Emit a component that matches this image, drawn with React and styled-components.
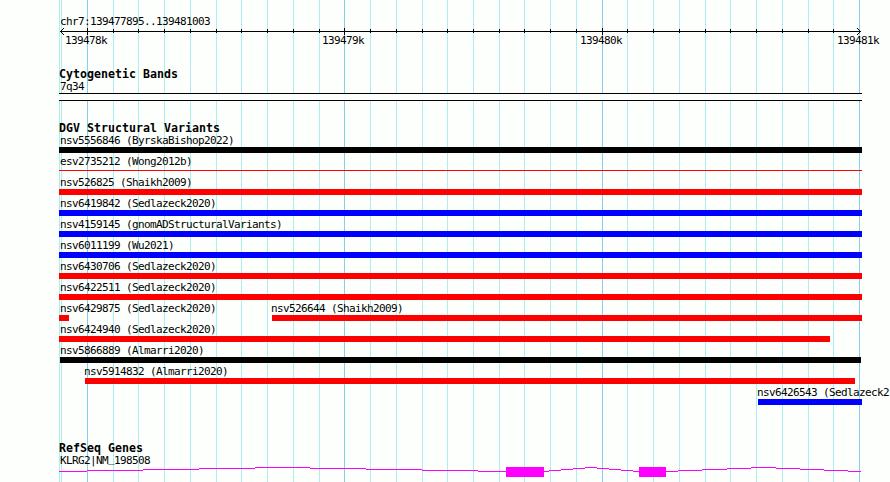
import React from 'react';
import styled, { createGlobalStyle } from 'styled-components';

const GlobalStyle = createGlobalStyle`
	body {
		margin: 0;
		background: #fdfffc;
		overflow: hidden;
	}
`;

const Browser = styled.main`
	position: relative;
	box-sizing: border-box;
	width: 890px;
	height: 482px;
	padding: 13px 0 0 59px;
	overflow: hidden;
	color: #000;
	font-family: 'DejaVu Sans Mono', 'Liberation Mono', monospace;
	font-size: 11px;
	letter-spacing: -0.622px;
	white-space: pre;
`;

const GridLines = styled.svg`
	position: absolute;
	top: 0;
	left: 0;
	display: block;
`;

const Content = styled.div`
	position: relative;
`;

const Label = styled.div`
	height: 15px;
	padding-left: 1px;
	line-height: 17px;
`;

const Underscore = styled.span`
	line-height: 1;
	vertical-align: 2px;
`;

const Drawing = styled.svg`
	display: block;
	overflow: visible;
`;

const Coordinates = styled.div`
	display: flex;
	height: 15px;
	line-height: 11px;
`;

const Coordinate = styled.span`
	flex: none;
	width: 42px;
	margin-left: ${({ $gap }) => $gap}px;
`;

const Track = styled.section`
	margin-top: ${({ $top }) => $top}px;
`;

const TrackTitle = styled.h2`
	height: 12px;
	margin: 0;
	font-size: 11.6px;
	font-weight: 700;
	line-height: 16px;
	letter-spacing: 0.016px;
`;

const Band = styled.div`
	box-sizing: border-box;
	width: 803px;
	height: 8px;
	border: solid #000;
	border-width: 1px 0;
	background: #fdfffc;
`;

const Row = styled.div`
	display: flex;
	height: 21px;
`;

const Feature = styled.div`
	flex: none;
	width: ${({ $width }) => $width}px;
	margin-left: ${({ $gap }) => $gap}px;
`;

const FeatureLabel = styled(Label)`
	padding-left: 0;
	text-indent: ${({ $indent }) => $indent}px;
`;

const Bar = styled.div`
	height: ${({ $thin }) => ($thin ? 1 : 6)}px;
	margin-top: ${({ $thin }) => ($thin ? 2 : 0)}px;
	background: ${({ $color }) => $color};
`;

const minorTicks = [
	113, 138, 164, 190, 216, 241, 267, 293, 319, 370, 396, 422, 447, 473, 499,
	524, 550, 576, 627, 653, 679, 705, 730, 756, 782, 808, 833,
];
const majorTicks = [87, 344, 602, 859];

const red = '#ff0000';
const blue = '#0000ff';
const black = '#000000';

const variants = [
	[{ name: 'nsv5556846 (ByrskaBishop2022)', width: 803, color: black }],
	[{ name: 'esv2735212 (Wong2012b)', width: 803, color: red, thin: true }],
	[{ name: 'nsv526825 (Shaikh2009)', width: 803, color: red }],
	[{ name: 'nsv6419842 (Sedlazeck2020)', width: 803, color: blue }],
	[{ name: 'nsv4159145 (gnomADStructuralVariants)', width: 803, color: blue }],
	[{ name: 'nsv6011199 (Wu2021)', width: 803, color: blue }],
	[{ name: 'nsv6430706 (Sedlazeck2020)', width: 803, color: red }],
	[{ name: 'nsv6422511 (Sedlazeck2020)', width: 803, color: red }],
	[
		{ name: 'nsv6429875 (Sedlazeck2020)', width: 10, color: red },
		{ name: 'nsv526644 (Shaikh2009)', gap: 203, width: 590, color: red, indent: -1 },
	],
	[{ name: 'nsv6424940 (Sedlazeck2020)', width: 771, color: red }],
	[{ name: 'nsv5866889 (Almarri2020)', gap: 1, width: 801, color: black, indent: 0 }],
	[{ name: 'nsv5914832 (Almarri2020)', gap: 26, width: 770, color: red, indent: -1 }],
	[{ name: 'nsv6426543 (Sedlazeck2', gap: 699, width: 104, color: blue, indent: -1 }],
];

// [start, end, y] of every step of the intron lines
const introns = [
	[59, 87, 4], [87, 143, 3], [143, 199, 2], [199, 255, 1], [255, 310, 0],
	[310, 366, 1], [366, 422, 2], [422, 478, 3], [478, 506, 4],
	[544, 549, 4], [549, 561, 3], [561, 573, 2], [573, 585, 1], [585, 597, 0],
	[597, 609, 1], [609, 621, 2], [621, 633, 3], [633, 639, 4],
	[666, 678, 4], [678, 702, 3], [702, 727, 2], [727, 751, 1], [751, 776, 0],
	[776, 800, 1], [800, 824, 2], [824, 848, 3], [848, 861, 4],
];
const exons = [[506, 544], [639, 666]];

const Grid = () => (
	<GridLines width="890" height="482" shapeRendering="crispEdges">
		{[59, 61, ...minorTicks].map(x => (
			<rect key={x} x={x} width="1" height="482" fill="#afeeee" />
		))}
		{majorTicks.map(x => (
			<rect key={x} x={x} width="1" height="482" fill="#87ceeb" />
		))}
	</GridLines>
);

const Ruler = () => (
	<Drawing width="803" height="7" viewBox="59 0 803 7" shapeRendering="crispEdges">
		<rect x="60" y="3" width="801" height="1" />
		{minorTicks.map(x => <rect key={x} x={x} y="1" width="1" height="4" />)}
		{majorTicks.slice(0, 3).map(x => <rect key={x} x={x} y="0" width="1" height="7" />)}
		{[1, 2, 3].map(n => (
			<React.Fragment key={n}>
				<rect x={60 + n} y={3 - n} width="1" height="1" />
				<rect x={60 + n} y={3 + n} width="1" height="1" />
				<rect x={860 - n} y={3 - n} width="1" height="1" />
				<rect x={860 - n} y={3 + n} width="1" height="1" />
			</React.Fragment>
		))}
	</Drawing>
);

const Gene = () => (
	<Drawing width="803" height="10" viewBox="59 0 803 10" shapeRendering="crispEdges" fill="#ff00ff">
		{introns.map(([start, end, y]) => (
			<rect key={start} x={start} y={y} width={end - start} height="1" />
		))}
		{exons.map(([start, end]) => (
			<rect key={start} x={start} y="0" width={end - start} height="10" />
		))}
	</Drawing>
);

const App = () => (
	<>
		<GlobalStyle />
		<Browser>
			<Grid />
			<Content>
				<Label>chr7:139477895..139481003</Label>
				<Ruler />
				<Coordinates>
					<Coordinate $gap={6}>139478k</Coordinate>
					<Coordinate $gap={215}>139479k</Coordinate>
					<Coordinate $gap={216}>139480k</Coordinate>
					<Coordinate $gap={215}>139481k</Coordinate>
				</Coordinates>
				<Track $top={16}>
					<TrackTitle>Cytogenetic Bands</TrackTitle>
					<Label>7q34</Label>
					<Band />
				</Track>
				<Track $top={19}>
					<TrackTitle>DGV Structural Variants</TrackTitle>
					{variants.map(features => (
						<Row key={features[0].name}>
							{features.map(({ name, gap = 0, width, color, thin, indent = 1 }) => (
								<Feature key={name} $gap={gap} $width={width}>
									<FeatureLabel $indent={indent}>{name}</FeatureLabel>
									<Bar $color={color} $thin={thin} />
								</Feature>
							))}
						</Row>
					))}
				</Track>
				<Track $top={35}>
					<TrackTitle>RefSeq Genes</TrackTitle>
					<Label>KLRG2|NM<Underscore>_</Underscore>198508</Label>
					<Gene />
				</Track>
			</Content>
		</Browser>
	</>
);

export default App;
